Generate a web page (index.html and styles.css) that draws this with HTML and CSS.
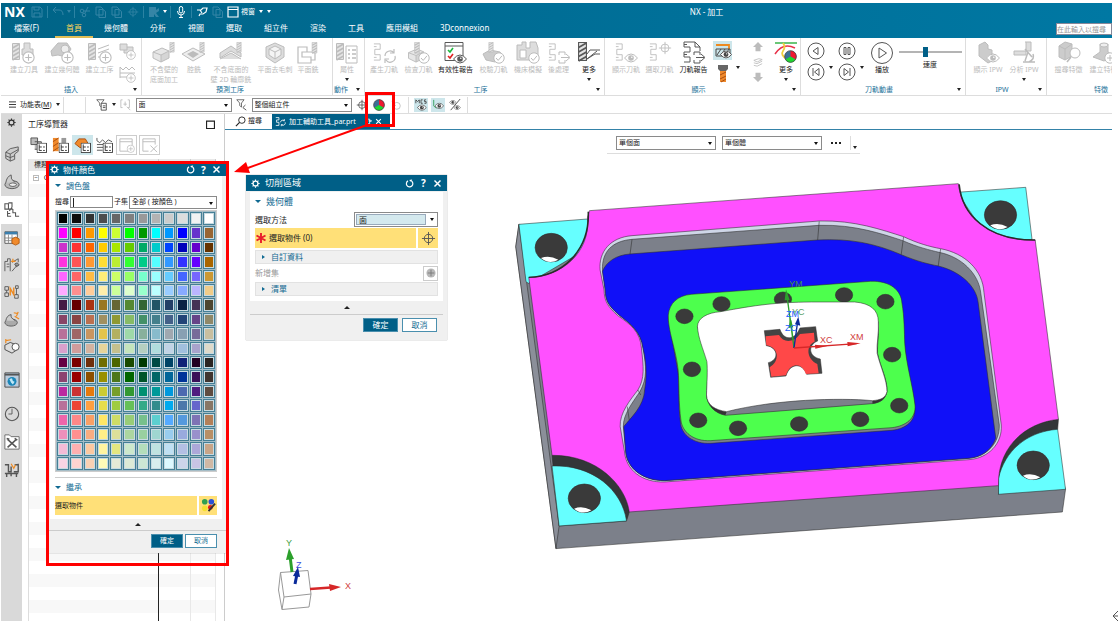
FILE: index.html
```html
<!DOCTYPE html>
<html lang="zh-Hant">
<head>
<meta charset="utf-8">
<title>NX - 加工</title>
<link rel="stylesheet" href="styles.css">
</head>
<body>
<svg class="defs" aria-hidden="true">
  <defs>
    <symbol id="plus" viewBox="0 0 12 12"><circle cx="6" cy="6" r="5.2" fill="#fff" stroke="currentColor"/><path d="M6 3v6M3 6h6" stroke="currentColor"/></symbol>
    <symbol id="check" viewBox="0 0 12 12"><circle cx="6" cy="6" r="5.2" fill="#fff" stroke="currentColor"/><path d="M3 6l2.200 2.400L9 3.800" fill="none" stroke="currentColor"/></symbol>
    <symbol id="eye" viewBox="0 0 14 10"><path d="M.5 5Q7-3 13.500 5 7 13 .5 5z" fill="#fff" stroke="currentColor"/><circle cx="7" cy="5" r="2.800" fill="currentColor"/><circle cx="7.800" cy="4.200" r=".8" fill="#fff"/></symbol>
    <symbol id="mill" viewBox="0 0 8 18"><path d="M.5.5h7v16h-7z" fill="#e4e4e4" stroke="currentColor"/><path d="M.5 5l7-4M.5 9l7-4M.5 13l7-4M.5 17l7-4" stroke="currentColor" stroke-width="1.600"/></symbol>
    <symbol id="path" viewBox="0 0 10 20"><path d="M1 1h7v6H2v6h6v6H1" fill="none" stroke="currentColor"/><path d="M1 4h3M1 16h3" stroke="currentColor"/></symbol>
    <symbol id="cube" viewBox="0 0 18 16"><path d="M1 5l9-4 7 3v7l-8 4-8-4z" fill="#e6e6e6" stroke="currentColor"/><path d="M1 5l8 3 8-4M9 8v7" fill="none" stroke="currentColor"/><path d="M9 8l8-4v7l-8 4z" fill="currentColor" opacity=".4"/></symbol>
    <symbol id="gear" viewBox="0 0 12 12"><circle cx="6" cy="6" r="3.300" fill="none" stroke="currentColor" stroke-width="1.700"/><path d="M6 .5v2M6 9.500v2M.5 6h2M9.500 6h2M2.100 2.100l1.400 1.400M8.500 8.500l1.400 1.400M2.100 9.900l1.400-1.400M8.500 3.500l1.400-1.400" stroke="currentColor" stroke-width="1.500"/></symbol>
    <symbol id="funnel" viewBox="0 0 14 14"><path d="M1 1h10L7.500 5.500V11L5 9V5.500z" fill="none" stroke="currentColor"/></symbol>
    <symbol id="wheel" viewBox="0 0 14 14"><circle cx="7" cy="7" r="6.300" fill="#3c6f96"/><path d="M7 7V.7a6.300 6.300 0 0 1 5.500 9.400z" fill="#f01830"/><path d="M7 7l5.500 3.200a6.300 6.300 0 0 1-11 0z" fill="#20d830"/><circle cx="7" cy="7" r="6.300" fill="none" stroke="#444" stroke-width=".8"/></symbol>
    <symbol id="tree" viewBox="0 0 12 12"><path d="M.5.5h11v11H.5z" fill="#fff" stroke="currentColor"/><path d="M3 2v7h3M3 5h3M7.500 5h2M7.500 9h2" fill="none" stroke="currentColor"/></symbol>
    <symbol id="reset" viewBox="0 0 12 12"><path d="M4 2.500A4.300 4.300 0 1 0 9 3" fill="none" stroke="currentColor" stroke-width="1.600"/><path d="M9.500.5l-4 .8 3 3z" fill="currentColor"/></symbol>
    <symbol id="cross" viewBox="0 0 12 12"><path d="M2 2l8 8M10 2l-8 8" stroke="currentColor" stroke-width="1.900"/></symbol>
    <symbol id="target" viewBox="0 0 16 16"><circle cx="8" cy="8" r="4.500" fill="none" stroke="currentColor"/><path d="M8 1v14M1 8h14" stroke="currentColor"/></symbol>
    <symbol id="copy" viewBox="0 0 12 12"><path d="M1 1h5l2 2v6H1zM4 3.500h4l2.500 2v6H4z" fill="none" stroke="currentColor"/></symbol>
  </defs>
</svg>

<div class="app">
  <header class="top">
    <div class="titlebar">
      <b class="logo">NX</b>
      <div class="quick">
        <button aria-label="儲存" class="dim"><svg viewBox="0 0 12 12"><path d="M1 1h8l2 2v8H1zM3 1v3h5V1M3 11V7h6v4" fill="none" stroke="currentColor"/></svg></button><i class="bar"></i>
        <button aria-label="復原" class="dim"><svg viewBox="0 0 12 12"><path d="M4 1L1 4l3 3M1 4h6q4 0 4 5" fill="none" stroke="currentColor"/></svg></button>
        <i class="tri dim"></i><i class="bar"></i>
        <button aria-label="剪下" class="dim"><svg viewBox="0 0 12 12"><circle cx="3" cy="5" r="1.800" fill="none" stroke="currentColor"/><circle cx="5" cy="9" r="1.800" fill="none" stroke="currentColor"/><path d="M5 5h6M6 7l3-6" stroke="currentColor"/></svg></button>
        <button aria-label="複製" class="dim"><svg><use href="#copy"/></svg></button>
        <button aria-label="貼上" class="dim"><svg><use href="#copy"/></svg></button>
        <button aria-label="定位" class="dim"><svg><use href="#target"/></svg></button><i class="bar"></i>
        <button aria-label="重複" class="dim"><svg viewBox="0 0 12 12"><path d="M1 1h7v3l3-2v3L8 7l3 4H8L6 8v3H1z" fill="currentColor"/></svg></button>
        <i class="tri"></i><i class="bar"></i>
        <button aria-label="語音"><svg viewBox="0 0 12 12"><rect x="4.300" y=".5" width="3.400" height="6.500" rx="1.700" fill="none" stroke="currentColor"/><path d="M2.500 5q0 4 3.500 4t3.500-4M6 9v2.500M4 11.500h4" fill="none" stroke="currentColor"/></svg></button><i class="bar"></i>
        <button aria-label="觸控"><svg viewBox="0 0 12 12"><path d="M1 4l4 0 2-2 4 0-1 4-3 2-3 0-1 2M4 4l2 3" fill="none" stroke="currentColor" stroke-width="1.200"/></svg></button>
        <button aria-label="視窗切換" class="dim"><svg><use href="#copy"/></svg></button>
        <button class="window"><svg viewBox="0 0 12 12"><path d="M1 1h10v10H1zM1 3.500h10" fill="none" stroke="currentColor" stroke-width="1.200"/></svg>視窗</button>
        <i class="tri"></i><i class="tri more"></i>
      </div>
      <h1>NX - 加工</h1>
    </div>
    <div class="menurow">
      <nav class="menu">
        <a href="#f" class="file">檔案(F)</a><a href="#h" class="on">首頁</a><a href="#g">幾何體</a><a href="#a">分析</a><a href="#v">視圖</a><a href="#s">選取</a><a href="#c">組立件</a><a href="#r">渲染</a><a href="#t">工具</a><a href="#m">應用模組</a><a href="#d">3Dconnexion</a>
      </nav>
      <input class="find" type="text" aria-label="搜尋指令" placeholder="在此輸入以搜尋">
    </div>
  </header>

  <div class="ribbon">
    <section class="g1"><div class="tools">
      <button disabled><svg viewBox="0 0 26 24"><use href="#mill" x="1" y="1" width="8" height="20"/><path d="M13 2h6v6h3v6H11V8h2z" fill="#ddd" stroke="currentColor"/><use href="#plus" x="11" y="10" width="13" height="13"/></svg>建立刀具</button>
      <button disabled><svg viewBox="0 0 26 24"><path d="M2 10L9 2h9l4 6-5 8-8-2-6 1z" fill="#ccc" stroke="currentColor"/><circle cx="16" cy="8" r="4" fill="#eee" stroke="currentColor"/><use href="#plus" x="12" y="10" width="13" height="13"/></svg>建立幾何體</button>
      <button disabled><svg viewBox="0 0 26 24"><use href="#mill" x="1" y="1" width="8" height="20"/><path d="M11 8l11-4M11 12l11-4M11 16h9" stroke="currentColor"/><use href="#plus" x="12" y="10" width="13" height="13"/></svg>建立工序</button>
      <div class="stack"><button disabled aria-label="建立程式"><svg viewBox="0 0 18 18"><path d="M1 2h7v6H1zM8 5h6v6H5V8" fill="#ddd" stroke="currentColor"/><use href="#plus" x="7" y="8" width="10" height="10"/></svg></button><button disabled aria-label="建立方法"><svg viewBox="0 0 18 18"><path d="M1 2l3 3 3-3 3 3 3-3 3 3M1 8h15M1 12h8M1 2v11" fill="none" stroke="currentColor"/><use href="#plus" x="7" y="8" width="10" height="10"/></svg></button></div>
    </div><h2>插入<i class="tri"></i></h2></section>
    <section class="g2"><div class="tools">
      <button disabled><svg viewBox="0 0 26 24"><use href="#cube" x="1" y="6" width="18" height="16"/><use href="#mill" x="18" y="1" width="6" height="11"/></svg>不含壁的<br>底面加工</button>
      <button disabled><svg viewBox="0 0 26 24"><path d="M1 13l11-6 12 6-12 7z" fill="#eee" stroke="currentColor"/><path d="M6 13l6-3 6 3-6 4z" fill="currentColor"/><use href="#mill" x="18" y="1" width="6" height="11"/></svg>腔銑</button>
      <button disabled><svg viewBox="0 0 26 24"><path d="M2 12l11-7 10 7v4l-10-6-11 7zM2 18l11-6 10 6" fill="#ddd" stroke="currentColor"/><use href="#mill" x="18" y="1" width="6" height="11"/></svg>不含底面的<br>壁 2D 輪廓銑</button>
      <button disabled><svg viewBox="0 0 26 24"><path d="M4 6l9-4 9 4v10l-9 6-9-6z" fill="#ddd" stroke="currentColor"/><path d="M7 8l6-3 6 3v6l-6 4-6-4z" fill="#f4f4f4" stroke="currentColor"/><path d="M7 8l6 3 6-3M13 11v7" fill="none" stroke="currentColor"/></svg>平面去毛刺</button>
      <button disabled><svg viewBox="0 0 26 24"><path d="M3 6h9v5h-5v5h9v6H3zM12 11h8v8h-4" fill="none" stroke="currentColor" stroke-width="1.200"/><use href="#mill" x="16" y="1" width="7" height="12"/></svg>平面銑</button>
    </div><h2>預測工序</h2></section>
    <section class="g3"><div class="tools">
      <button disabled><svg viewBox="0 0 26 24"><use href="#mill" x="2" y="1" width="8" height="20"/><path d="M12 5h11v17H12z" fill="#fff" stroke="currentColor"/><path d="M14 9h2M18 9h4M14 13h2M18 13h4M14 17h2M18 17h4" stroke="currentColor" stroke-width="1.500"/></svg>屬性<i class="tri"></i></button>
    </div><h2>動作<i class="tri"></i></h2></section>
    <section class="g4"><div class="tools">
      <button disabled><svg viewBox="0 0 26 24"><use href="#path" x="2" y="1" width="9" height="20"/><path d="M14 15a5 5 0 0 1 9-3M24 15a5 5 0 0 1-9 4M23 8v4h-4M14 22v-4h4" fill="none" stroke="currentColor" stroke-width="1.200"/></svg>產生刀軌</button>
      <button disabled><svg viewBox="0 0 26 24"><use href="#cube" x="1" y="7" width="18" height="15"/><use href="#mill" x="8" y="1" width="6" height="12"/><use href="#check" x="12" y="11" width="12" height="12"/></svg>檢查刀軌</button>
      <button><svg viewBox="0 0 26 24"><path d="M2 1.500h18v18H2zM2 5h18" fill="#fff" stroke="currentColor"/><path d="M5 9l2 2 3-4" fill="none" stroke="#1db83c" stroke-width="1.600"/><path d="M5 15l2 2 3-4" fill="none" stroke="#e02020" stroke-width="1.600"/><use href="#eye" x="10" y="13" width="14" height="10"/></svg>有效性報告</button>
      <button disabled><svg viewBox="0 0 26 24"><path d="M2 13l7-4 10 2 3 5-8 5-9-2z" fill="#ccc" stroke="currentColor"/><use href="#mill" x="7" y="1" width="6" height="11"/><use href="#check" x="12" y="11" width="12" height="12"/></svg>校驗刀軌</button>
      <button disabled><svg viewBox="0 0 26 24"><path d="M2 4h5v-3h4v6h4V1h6l2 6v12H2z" fill="#ddd" stroke="currentColor"/><path d="M5 9h6v8H5z" fill="#fff" stroke="currentColor"/><use href="#check" x="13" y="11" width="12" height="12"/></svg>機床模擬</button>
      <button disabled><svg viewBox="0 0 26 24"><use href="#path" x="2" y="1" width="9" height="20"/><path d="M13 14v-3h6v3M13 19v3h6v-3M15 16.500h8M20 13l4 3.500-4 3.500" fill="none" stroke="currentColor"/></svg>後處理</button>
      <button><svg viewBox="0 0 26 24"><use href="#mill" x="2" y="0" width="9" height="22"/><path d="M11 13l3-4h10M11 18l8-5h5M11 18l10-8" stroke="currentColor" fill="none"/></svg>更多<i class="tri"></i></button>
    </div><h2>工序<i class="tri"></i></h2></section>
    <section class="g5"><div class="tools">
      <button disabled><svg viewBox="0 0 26 24"><use href="#path" x="2" y="1" width="9" height="20"/><use href="#eye" x="11" y="12" width="14" height="10"/></svg>顯示刀軌</button>
      <button disabled><svg viewBox="0 0 26 24"><use href="#path" x="2" y="1" width="9" height="20"/><use href="#target" x="11" y="0" width="14" height="14"/></svg>選取刀軌</button>
      <button><svg viewBox="0 0 26 24"><path d="M3 1h11l5 5v4M3 1v5h6v5H3v5h6v5H3M3 3.500h3M3 13.500h3M14 1v5h5M13 14v-3h6v3M13 19v3h6v-3M15 16.500h8M20 13l4 3.500-4 3.500" fill="none" stroke="currentColor"/></svg>刀軌報告</button>
      <div class="stack"><button class="lit" aria-label="顯示切削"><svg viewBox="0 0 18 18"><path d="M2 3h13v4" fill="none" stroke="#ee8a20" stroke-width="1.800"/><path d="M2 7h14v7H2zM3 13l4-6M7 13l4-6M11 13l4-6" fill="none" stroke="currentColor"/><use href="#eye" x="6" y="8" width="12" height="9"/></svg></button><button aria-label="顯示刀具"><svg viewBox="0 0 18 18"><path d="M4 0h10v4l-2 2H6L4 4z" fill="#666"/><path d="M6 6h6v11H6z" fill="#f08a2c"/><path d="M6 10l6-3M6 14l6-3M7 17l5-3" stroke="#a94e10"/></svg></button></div>
      <div class="mini"><i class="tri"></i></div>
      <div class="stack tight"><button disabled aria-label="上移"><svg viewBox="0 0 12 12"><path d="M6 0l6 6H9v5H3V6H0z" fill="currentColor"/></svg></button><button disabled aria-label="圖層"><svg viewBox="0 0 12 12"><path d="M1 4l6-2 4 1-6 3zM1 7l4 1 6-3M1 10l4 1 6-3" fill="none" stroke="currentColor"/></svg></button><button disabled aria-label="下移"><svg viewBox="0 0 12 12"><path d="M6 12l6-6H9V1H3v5H0z" fill="currentColor"/></svg></button></div>
      <button><svg viewBox="0 0 26 24"><path d="M2 2h22" stroke="#39b54a" stroke-width="1.500"/><path d="M2 13q8-12 20-6" fill="none" stroke="#e8324a" stroke-width="1.500"/><path d="M10 2q3 4 0 8t4 8" fill="none" stroke="#f0cf40" stroke-width="1.800"/><use href="#wheel" x="11" y="9" width="13" height="13"/></svg>更多<i class="tri"></i></button>
    </div><h2>顯示<i class="tri"></i></h2></section>
    <section class="g6"><div class="tools">
      <div class="stack round"><button aria-label="倒播"><svg viewBox="0 0 18 18"><circle cx="9" cy="9" r="8"/><path d="M11 5.500L6 9l5 3.500z"/></svg></button><button aria-label="上一步"><svg viewBox="0 0 18 18"><circle cx="9" cy="9" r="8"/><path d="M12 5.500L7.500 9l4.500 3.500zM6 5v8"/></svg></button></div>
      <div class="mini low"><i class="tri"></i></div>
      <div class="stack round"><button aria-label="暫停"><svg viewBox="0 0 18 18"><circle cx="9" cy="9" r="8"/><path d="M6 5.500h2v7H6zM10 5.500h2v7h-2z"/></svg></button><button aria-label="下一步"><svg viewBox="0 0 18 18"><circle cx="9" cy="9" r="8"/><path d="M6 5.500L10.500 9 6 12.500zM12 5v8"/></svg></button></div>
      <div class="mini low"><i class="tri"></i></div>
      <button class="play"><svg viewBox="0 0 24 24"><circle cx="12" cy="12" r="10.500"/><path d="M9 7l7.500 5L9 17z"/></svg>播放</button>
      <label class="speed"><input type="range" min="0" max="100" value="43">速度</label>
    </div><h2>刀軌動畫<i class="tri"></i></h2></section>
    <section class="g7"><div class="tools">
      <button disabled><svg viewBox="0 0 26 24"><path d="M4 4l6-3 3 3v4l4 1v4l4 1v4l-8 4-9-7z" fill="#ccc" stroke="currentColor"/><use href="#eye" x="11" y="12" width="14" height="10"/></svg>顯示 IPW</button>
      <button disabled><svg viewBox="0 0 26 24"><path d="M14 1h6v9H3v4h12V1" fill="#ddd" stroke="currentColor"/><path d="M14 8l7 8M12 21h12M17 11l-3 9M22 13q2 5-4 8" fill="none" stroke="currentColor" stroke-width="1.500"/></svg>分析 IPW<i class="tri"></i></button>
    </div><h2>IPW<i class="tri"></i></h2></section>
    <section class="g8"><div class="tools">
      <button disabled><svg viewBox="0 0 26 24"><path d="M3 5l6-4 7 2v12l-7 4-6-3z" fill="#ccc" stroke="currentColor"/><path d="M3 5l6 3 7-5M9 8v11" fill="none" stroke="currentColor"/><circle cx="19" cy="12" r="5" fill="#fff" stroke="currentColor"/><path d="M15 16l-4 5" stroke="currentColor" stroke-width="1.600"/></svg>搜尋特徵</button>
      <button disabled><svg viewBox="0 0 26 24"><path d="M2 16l7-5V3h8v8l6 4-10 5z" fill="#ccc" stroke="currentColor"/><ellipse cx="13" cy="4" rx="4" ry="2" fill="#eee" stroke="currentColor"/><use href="#plus" x="13" y="11" width="12" height="12"/></svg>建立特徵</button>
    </div><h2>特徵</h2></section>
  </div>

  <div class="selbar">
    <button class="fn"><svg viewBox="0 0 8 8"><path d="M0 1h8M0 4h8M0 7h8" stroke="currentColor"/></svg><span>功能表(<u>M</u>)</span><i class="tri"></i></button>
    <i class="vr"></i><i class="vr far"></i>
    <button aria-label="篩選"><svg viewBox="0 0 14 14"><use href="#funnel" width="12" height="12"/><path d="M6 5h6v8H6zM8 8h3M8 10h3" fill="#fff" stroke="currentColor"/></svg></button><i class="tri"></i>
    <button disabled aria-label="加入選取"><svg viewBox="0 0 14 14"><path d="M3 1H1v9h2M9 1h2v9H9M6 3v5M4 6h4M8 9l4 4" fill="none" stroke="currentColor"/></svg></button>
    <span class="combo type"><select aria-label="類型篩選"><option>面</option></select></span>
    <button aria-label="重設篩選"><svg viewBox="0 0 14 14"><use href="#funnel" width="12" height="12"/><path d="M8 10l3-3M8 10l4 3" stroke="currentColor"/></svg></button>
    <span class="combo scope"><select aria-label="選取範圍"><option>整個組立件</option></select></span>
    <button aria-label="定位"><svg><use href="#target"/></svg></button>
    <button aria-label="物件顏色"><svg><use href="#wheel"/></svg></button>
    <button disabled aria-label="隱藏"><svg viewBox="0 0 14 14"><circle cx="8" cy="8" r="4" fill="none" stroke="currentColor"/><path d="M2 3l5 5" stroke="currentColor"/></svg></button>
    <i class="vr mid"></i>
    <button class="lit" aria-label="顯示 MCS"><svg viewBox="0 0 14 14"><path d="M1 5V1l2 2 2-2v4M9 1H7v4h2M13 1h-2v2h2v2h-2" fill="none" stroke="currentColor"/><use href="#eye" x="2" y="6" width="12" height="8"/></svg></button>
    <button class="lit" aria-label="顯示座標"><svg viewBox="0 0 14 14"><path d="M2 1v7l3 3" fill="none" stroke="#2a9a50"/><use href="#eye" x="3" y="4" width="11" height="8"/></svg></button>
    <button aria-label="反轉顯示"><svg viewBox="0 0 14 14"><use href="#eye" x="0" y="1" width="9" height="6"/><use href="#eye" x="5" y="7" width="9" height="6"/><path d="M13 0L2 13" stroke="currentColor"/></svg></button>
    <i class="vr mid"></i>
  </div>

  <main class="work">
    <aside class="rail">
      <button class="first" aria-label="設定"><svg><use href="#gear"/></svg></button>
      <button aria-label="組立件導覽器"><svg viewBox="0 0 18 18"><path d="M2 7l5-4 9-2v5l-4 3v6l-5 2-5-3z" fill="#ccc" stroke="#555"/><path d="M2 7l5 2 9-5M7 9v8M2 11l5 2 5-2" fill="none" stroke="#555"/></svg></button>
      <button aria-label="零件導覽器"><svg viewBox="0 0 18 18"><ellipse cx="9" cy="12" rx="8" ry="4.500" fill="#bbb" stroke="#555"/><ellipse cx="10" cy="12" rx="4" ry="2" fill="#eee" stroke="#555"/><path d="M2 10Q3 3 8 1q-1 5 4 8" fill="#ccc" stroke="#555"/></svg></button>
      <button class="on" aria-label="工序導覽器"><svg viewBox="0 0 18 18"><path d="M1 2h4v6H1zM5 1h4v5M1 8h7M9 6l-3 4M4 10v6h4M10 8v4h3v4h4M10 8h-2M4 13h3" fill="none" stroke="#555" stroke-width="1.200"/></svg></button>
      <button class="s" aria-label="加工特徵"><svg viewBox="0 0 18 18"><path d="M1 2h14v13H1z" fill="#fff" stroke="#555"/><path d="M1 2h14v3H1z" fill="#3b7fae"/><path d="M1 9h14M1 12h14M5 5v10M9 5v10" stroke="#888"/><path d="M9 10l4-2 4 2v5l-4 2-4-2z" fill="#f08a2c" stroke="#b45a10"/></svg></button>
      <button class="s" aria-label="機床導覽器"><svg viewBox="0 0 18 18"><path d="M1 16V5h3V2h3v14M9 6l7-4v4M3 8h3M3 11h3" fill="none" stroke="#555"/><path d="M9 16l6-7M12 8q3-3 5 1l-3 2z" stroke="#555" fill="#999"/><path d="M10 2v4M8 5h5" stroke="#ee8a20" stroke-width="1.400"/></svg></button>
      <button class="s" aria-label="程序"><svg viewBox="0 0 18 18"><path d="M1 3h4v4H1zM3 7v3M1 10h4v4H1zM13 2h3v3h-3zM12 12h4v4h-4zM14 5v7" fill="none" stroke="#555"/><path d="M7 13V5l4 7V4" fill="none" stroke="#ee8a20" stroke-width="1.600"/></svg></button>
      <button class="s" aria-label="刀具"><svg viewBox="0 0 18 18"><ellipse cx="8" cy="13" rx="7" ry="4" fill="#aaa" stroke="#555"/><path d="M2 11Q3 5 8 4q-1 4 5 7" fill="#ccc" stroke="#555"/><path d="M11 2l5 1M16 1l-2 5M12 6l5 3" stroke="#ee8a20" stroke-width="1.300"/></svg></button>
      <button aria-label="檢查"><svg viewBox="0 0 18 18"><path d="M1 8l6-3 8 3v5l-6 4-8-4z" fill="#ddd" stroke="#444"/><circle cx="13" cy="10" r="4" fill="#fff" stroke="#444"/><path d="M2 1v5M2 3l6-1" stroke="#ee8a20" stroke-width="1.300"/></svg></button>
      <button class="gap" aria-label="網頁瀏覽器"><svg viewBox="0 0 18 18"><path d="M1 1h16v16H1z" fill="#bcd" stroke="#444"/><path d="M1 3h16" stroke="#555" stroke-width="2"/><circle cx="9" cy="10.500" r="5" fill="#1b86b8"/><path d="M6 8l3-1 1 3 2 1-2 3-2-2z" fill="#bfe6f5"/></svg></button>
      <button class="gap2" aria-label="歷程"><svg viewBox="0 0 18 18"><circle cx="9" cy="9" r="7.500" fill="none" stroke="#555" stroke-width="1.200"/><path d="M9 3v6H5" fill="none" stroke="#555"/></svg></button>
      <button aria-label="工具"><svg viewBox="0 0 18 18"><path d="M1 4V1h5l2 2h9v14H1z" fill="#fff" stroke="#666"/><path d="M4 6l10 9M14 6L4 15M3 5l3 1M12 5l3 2" stroke="#555" stroke-width="1.700"/></svg></button>
      <button aria-label="機床"><svg viewBox="0 0 18 18"><path d="M1 3h4v8h3V5M16 2v9h-5M1 13h15M3 13v4M8 13v3M14 13v4M12 3h4" fill="none" stroke="#555" stroke-width="1.600"/><path d="M8 2l3 5 2-4" stroke="#ee8a20" fill="none" stroke-width="1.300"/></svg></button>
    </aside>

    <section class="navigator">
      <div class="navhead"><h2>工序導覽器</h2><button aria-label="最大化"><svg viewBox="0 0 8 8"><path d="M.5 1h7v6.500h-7z" fill="none" stroke="currentColor"/></svg></button></div>
      <div class="navtools">
        <button aria-label="程式順序視圖"><svg viewBox="0 0 18 18"><path d="M1 1h7v7H1zM5 5h7v8H5" fill="#bbb" stroke="#555"/><use href="#tree" x="7" y="6" width="11" height="11"/></svg></button>
        <button aria-label="機床視圖"><svg viewBox="0 0 18 18"><path d="M1 1h6v14H1z" fill="#f08a2c"/><path d="M1 5l6-4M1 10l6-4M1 15l6-4" stroke="#a94e10"/><path d="M10 1h5v6h-5z" fill="#999"/><use href="#tree" x="7" y="6" width="11" height="11"/></svg></button>
        <button class="lit" aria-label="幾何視圖"><svg viewBox="0 0 18 18"><path d="M1 7l4-5 7 0 3 5-5 5-4-1z" fill="#f08a2c" stroke="#a94e10"/><use href="#tree" x="7" y="6" width="11" height="11"/></svg></button>
        <button aria-label="加工方法視圖"><svg viewBox="0 0 18 18"><path d="M1 1v3l3 2 3-3 3 3 3-3 4 2M1 8h10M1 11h8M1 14h6" fill="none" stroke="#555"/><use href="#tree" x="7" y="6" width="11" height="11"/></svg></button>
        <button class="boxed" disabled aria-label="新增欄"><svg viewBox="0 0 18 18"><path d="M2 2h13v13H2zM2 5h13" fill="none" stroke="currentColor"/><use href="#plus" x="9" y="8" width="9" height="9"/></svg></button>
        <button class="boxed" disabled aria-label="刪除欄"><svg viewBox="0 0 18 18"><path d="M8 15H2V2h13v6M2 5h13M10 9l7 7M17 9l-7 7" fill="none" stroke="currentColor"/></svg></button>
      </div>
      <div class="treebox"><table class="optree">
        <thead><tr><th class="c1">標題</th><th class="c2"></th><th class="c3"></th></tr></thead>
        <tbody id="rows"><tr><td><span class="fold">−</span> GEOMETRY</td><td></td><td></td></tr></tbody>
      </table></div>
    </section>

    <section class="view">
      <div class="tabs">
        <button class="tab"><svg viewBox="0 0 12 12"><circle cx="7.500" cy="4.500" r="3.500" fill="none" stroke="currentColor"/><path d="M5 7l-4 4" stroke="currentColor" stroke-width="1.300"/></svg>搜尋</button>
        <button class="tab on"><svg viewBox="0 0 14 12"><path d="M1 1h4v3H2v3h3v4H1M7 7a3 3 0 0 1 5-2M13 7a3 3 0 0 1-5 3M12 3v2h-2M8 12v-2h2" fill="none" stroke="currentColor"/></svg><span>加工輔助工具_par.prt</span><svg class="sm" viewBox="0 0 12 12"><path d="M2 2h6v8H2zM6 5h5M9 3l2 2-2 2" fill="none" stroke="currentColor" stroke-width="1.400"/></svg><svg class="sm"><use href="#cross"/></svg></button>
      </div>
      <div class="canvas">
        <svg class="scene" viewBox="225 130 893 495" role="img" aria-label="加工零件模型">
          <g transform="translate(500 130) scale(.3941 .3333)" class="solid">
            <path fill="#7c808a" d="M48 283L40 350 142 1256 1427 1146 1435 1078 1300 600z"/>
            <path fill="#8b8f99" d="M48 283L40 350 142 1256 150 1188z"/>
            <path fill="#6ff" d="M48 283L222 267 230 350 72 460 66 455z"/>
            <path fill="#6ff" d="M1160 187L1334 172 1350 328 1250 345z"/>
            <path fill="#333638" d="M132 976C250 975 320 1070 328 1146L321 1173 150 1188z"/>
            <path fill="#6ff" d="M132 1008C235 1003 310 1080 321 1173L150 1188z"/>
            <path fill="#333638" d="M1417 868C1325 880 1262 960 1265 1067L1265 1093 1415 898z"/>
            <path fill="#6ff" d="M1415 898L1435 1078 1265 1093 1265 1045C1280 965 1335 905 1415 898z"/>
            <path fill="#ff50ff" d="M227 242L1163 161C1172 252 1235 332 1358 330L1417 868C1325 880 1262 960 1265 1067L328 1146C320 1070 250 975 132 976L73 442C155 440 230 370 222 262z"/>
            <path fill="none" stroke-width="4" d="M73 442C155 440 228 365 224 245M1165 163C1172 252 1235 332 1358 330"/>
            <path fill="#cfd6e8" d="M335 317L810 273C900 270 970 300 1024 320 1060 340 1090 350 1118 356 1180 370 1225 420 1228 487L1272 885C1275 940 1240 985 1190 989L418 1056C360 1058 320 1020 316 966L305 890C303 850 330 810 350 780 368 745 364 710 359 655 356 605 330 582 300 558 270 528 265 510 264 480L254 420C250 365 280 322 335 317z"/>
            <path fill="#7c808a" d="M335 328L810 286C900 283 970 312 1022 332 1060 352 1090 360 1114 367 1170 380 1215 430 1220 490L1267 885C1268 940 1235 980 1190 985L418 1052C362 1052 323 1015 319 966L313 890C312 855 335 820 355 785 374 745 371 710 363 655 358 605 330 580 302 555 273 525 268 510 267 480L260 420C258 365 285 333 335 328z"/>
            <path fill="#1010f8" d="M330 372L806 330C890 325 950 340 1018 374 1060 395 1090 403 1112 408 1170 425 1208 470 1213 515L1258 925C1245 965 1220 981 1190 985L418 1052C362 1052 323 1015 319 966L314 890C330 865 365 830 367 780 374 730 370 690 363 655 358 605 330 580 302 555 273 525 268 510 267 480L260 424C270 395 295 375 330 372z"/>
            <path fill="none" d="M335 328L330 372M810 274L806 330M1024 321L1018 374M1118 357L1112 408M350 780L357 795M323 830L328 870"/>
            <path fill="#7c808a" d="M485 501L940 462 1026 648C1030 708 1048 778 1052 833 1056 873 1030 896 995 901L535 940C490 943 460 913 458 878 452 828 455 768 452 728L427 563z"/>
            <path fill="#4dff4d" d="M485 493L940 454C990 452 1018 480 1020 520 1026 560 1026 610 1027 640 1030 700 1048 770 1053 825 1056 865 1030 888 995 893L535 932C490 935 462 905 459 870 453 820 455 760 452 720 447 660 425 600 427 555 430 520 450 497 485 493z"/>
            <g fill="#3a3a3a"><circle cx="468" cy="559" r="22"/><circle cx="562" cy="522" r="22"/><circle cx="718" cy="508" r="22"/><circle cx="873" cy="495" r="22"/><circle cx="978" cy="515" r="22"/><circle cx="487" cy="718" r="22"/><circle cx="995" cy="674" r="22"/><circle cx="503" cy="871" r="22"/><circle cx="604" cy="895" r="22"/><circle cx="759" cy="882" r="22"/><circle cx="914" cy="868" r="22"/><circle cx="1013" cy="827" r="22"/></g>
            <path fill="#7c808a" d="M560 545L960 575C962 620 957 640 958 670 965 710 984 750 982 785 978 808 965 818 945 821L572 856C545 850 525 825 524 795 525 760 530 720 528 695L501 590z"/>
            <path fill="#333" stroke="none" d="M524 795C525 825 545 850 572 856L575 845zM945 821C965 818 978 808 982 785L945 812z"/>
            <path fill="#fff" d="M560 545C650 525 700 517 790 516L900 516C940 520 960 540 960 575 962 610 955 640 957 670 965 710 982 750 982 785 978 805 965 810 945 812 860 803 700 808 575 845 545 840 525 825 524 795 525 760 527 720 525 695 515 655 503 625 501 590 501 565 525 548 560 545z"/>
            <g fill="#3a3a3a"><ellipse cx="130" cy="353" rx="41" ry="43"/><ellipse cx="1270" cy="255" rx="41" ry="43"/><ellipse cx="214" cy="1105" rx="41" ry="43"/><ellipse cx="1353" cy="1006" rx="41" ry="43"/></g>
            <g fill="#fff" stroke="none"><path d="M104 384Q125 374 148 389 125 405 104 384zM1244 286Q1265 276 1288 291 1265 307 1244 286zM188 1136Q209 1126 232 1141 209 1157 188 1136zM1327 1037Q1348 1027 1371 1042 1348 1058 1327 1037z"/></g>
          </g>
          <g transform="translate(640 260) scale(.3333)" class="solid">
            <path fill="#444" d="M373 212L420 208C430 240 462 245 480 204L527 200 533 243C503 255 505 290 541 297L546 340 500 343C488 308 450 308 438 348L392 352 385 308C418 300 415 262 379 257z"/>
            <path fill="#ff4848" stroke="none" d="M377 229L417 225C430 250 462 248 480 222L522 218 524 245C498 255 498 296 532 312L536 340 498 342C486 306 450 306 438 346L394 350 389 322C420 305 418 262 379 256z"/>
            <g stroke-width="4"><path stroke="#2ca02c" d="M462 264L440 100M462 264L452 180"/><path stroke="#0a2a9a" d="M462 264L473 185"/><path stroke="#d62728" d="M462 264L650 251"/></g>
            <g stroke="none"><path fill="#2ca02c" d="M438 88L449 120 434 121zM450 172L460 202 446 204z"/><path fill="#0a2a9a" d="M475 170L481 197 465 193z"/><path fill="#d62728" d="M662 250L622 246 623 259zM562 258L525 254 526 266z"/></g>
          </g>
          <g class="axis">
            <text x="789" y="287" fill="#3f8f3f">YM</text><text x="792" y="315" fill="#5aa06a">YC</text><text x="786" y="317" fill="#2060ff">ZM</text><text x="785" y="331" fill="#2060ff">ZC</text><text x="820" y="343" fill="#d04040">XC</text><text x="850" y="340" fill="#d04040">XM</text>
            <text x="286" y="546" fill="#3f9f3f">Y</text><text x="296" y="568" fill="#4050e0">Z</text><text x="345" y="589" fill="#d04040">X</text>
          </g>
          <g fill="none" stroke="#999"><path d="M280.500 572.500L308 570.500 311 594 309 607 282 609.500 278.500 590zM280.500 572.500L284 597 282 609.500M284 597L311 594"/></g>
          <path d="M292 572L290 556" stroke="#2ca02c" stroke-width="3"/><path d="M289 548L294 559 286 560z" fill="#2ca02c"/>
          <path d="M295 584L297 574" stroke="#0a2a9a" stroke-width="3"/><path d="M298 567L300 577 293 576z" fill="#0a2a9a"/>
          <path d="M310 589L331 587.500" stroke="#d62728" stroke-width="2.500"/><path d="M341 587L329 584 330 591z" fill="#d62728"/>
          <path d="M1118 611L1113 616 1118 621M1113 616h6" fill="none" stroke="#555"/>
        </svg>
        <div class="pickbar">
          <span class="combo"><select aria-label="面規則"><option>單個面</option></select></span>
          <span class="combo"><select aria-label="體規則"><option>單個體</option></select></span>
          <button aria-label="更多選項"><svg viewBox="0 0 12 4"><path d="M1 1h2v2H1zM5 1h2v2H5zM9 1h2v2H9z" fill="currentColor"/></svg></button><i class="vr"></i><i class="tri"></i>
        </div>
      </div>
    </section>
  </main>

  <form class="dialog color">
    <header><svg><use href="#gear"/></svg><h2>物件顏色</h2><button type="button" aria-label="重設"><svg><use href="#reset"/></svg></button><button type="button" aria-label="說明">?</button><button type="button" aria-label="關閉"><svg><use href="#cross"/></svg></button></header>
    <div class="pane">
      <h3><i class="tri"></i>調色盤</h3>
      <div class="search"><label for="cs">搜尋</label><input id="cs" type="text"><label for="sub">子集</label><span class="combo"><select id="sub"><option>全部 ( 按顏色 )</option></select></span></div>
      <div class="palette" id="palette"></div>
      <h3 class="inherit"><i class="tri"></i>繼承</h3>
      <div class="pick"><span>選取物件</span><button type="button" aria-label="選取物件"><svg viewBox="0 0 16 16"><circle cx="4" cy="4" r="3" fill="#30a050"/><circle cx="11" cy="4" r="3" fill="#2a50d8"/><circle cx="4" cy="11" r="3" fill="#f5e030"/><circle cx="10" cy="10" r="2.600" fill="#e02020"/><path d="M15 6L8 14" stroke="#333" stroke-width="2"/></svg></button></div>
    </div>
    <div class="fold-up"><i class="tri up"></i></div>
    <footer><button type="button" class="ok">確定</button><button type="button" class="cancel">取消</button></footer>
  </form>

  <form class="dialog area">
    <header><svg><use href="#gear"/></svg><h2>切削區域</h2><button type="button" aria-label="重設"><svg><use href="#reset"/></svg></button><button type="button" aria-label="說明">?</button><button type="button" aria-label="關閉"><svg><use href="#cross"/></svg></button></header>
    <div class="pane">
      <h3><i class="tri"></i>幾何體</h3>
      <div class="row"><label for="how">選取方法</label><span class="combo"><select id="how"><option>面</option></select></span></div>
      <div class="pick"><span><svg viewBox="0 0 12 12"><path d="M6 1v10M1.500 3.500l9 5M1.500 8.500l9-5" stroke="#e81e2c" stroke-width="1.900"/></svg>選取物件 (0)</span><button type="button" aria-label="選取物件"><svg><use href="#target"/></svg></button></div>
      <button type="button" class="section"><i class="tri right"></i>自訂資料</button>
      <div class="row muted"><span>新增集</span><button type="button" class="add" disabled aria-label="新增集"><svg viewBox="0 0 12 12"><circle cx="6" cy="6" r="5.500" fill="#b8b8b8"/><path d="M6 2v8M2 6h8" stroke="#777"/></svg></button></div>
      <button type="button" class="section"><i class="tri right"></i>清單</button>
    </div>
    <div class="fold-up"><i class="tri up"></i></div>
    <footer><button type="button" class="ok">確定</button><button type="button" class="cancel">取消</button></footer>
  </form>

  <svg class="marks" viewBox="0 0 1118 625" aria-hidden="true">
    <g fill="none" stroke="red" stroke-width="3"><rect x="366.500" y="93.500" width="27" height="32"/><rect x="47.500" y="162.500" width="180" height="402"/><path d="M367 125L245 169" stroke-width="2"/></g>
    <path d="M234 172L246 162 250 173z" fill="red"/>
  </svg>
</div>
<script src="palette.js"></script>
</body>
</html>
```
FILE: styles.css
```css
* { box-sizing: border-box; }
body { margin: 0; background: #fff; color: #222; font: 7px/10px "Noto Sans", "Noto Sans CJK TC", sans-serif; }
h1, h2, h3 { margin: 0; font-size: inherit; font-weight: 400; }
button, select, input { margin: 0; padding: 0; border: 0; background: none; color: inherit; font: inherit; border-radius: 0; }
button { display: inline-flex; align-items: center; justify-content: center; white-space: nowrap; }
svg { flex: none; }
.defs { position: absolute; width: 0; height: 0; }
.app { position: relative; display: flex; flex-direction: column; min-height: 100vh; padding: 3px 0 0 1px; overflow: hidden; }
.tri { flex: none; width: 0; height: 0; border: 2px solid transparent; border-top: 3px solid currentColor; border-bottom: 0; }
.tri.up { border-top: 0; border-bottom: 3px solid currentColor; border-left-width: 3px; border-right-width: 3px; }
.tri.right { border: 2px solid transparent; border-left: 3px solid currentColor; border-right: 0; }
.vr { flex: none; width: 1px; height: 16px; background: #ddd; }
.lit { background: #cde6eb; }

.top { margin-right: 6px; background: linear-gradient(90deg, #006487, #007099 60%, #0078a3); color: #fff; }
.titlebar { position: relative; display: flex; align-items: center; height: 17px; padding-left: 3px; }
.logo { width: 26px; font: bold 14px/17px "Noto Sans", sans-serif; }
.quick { display: flex; align-items: center; gap: 2px; }
.quick svg { width: 12px; height: 12px; }
.quick button { width: 14px; height: 14px; }
.quick .window { width: auto; gap: 2px; padding-right: 2px; }
.quick .bar { width: 1px; height: 12px; background: #2b83a3; margin: 0 1px; }
.quick .more { margin-left: 2px; }
.quick .dim { color: #3585a6; }
.titlebar h1 { position: absolute; left: 62%; font-size: 8px; }
.menurow { display: flex; align-items: center; justify-content: space-between; height: 18px; }
.menu { display: flex; gap: 22px; padding-left: 13px; align-items: stretch; height: 18px; }
.menu a { color: #fff; font-size: 8px; line-height: 16px; text-decoration: none; white-space: nowrap; }
.menu .file { margin-right: 5px; }
.menu .on { color: #ffd65a; border-bottom: 2px solid #e0bd55; padding: 0 11px; margin: 0 -11px; }
.find { width: 56px; height: 12px; background: #fff; border: 1px solid #889; color: #333; }
.find::placeholder { color: #999; }

.ribbon { display: flex; height: 58px; margin-right: 6px; border-bottom: 1px solid #ddd; overflow: hidden; }
.ribbon section { display: flex; flex: none; flex-direction: column; justify-content: space-between; padding-top: 3px; border-right: 1px solid #ddd; height: 57px; }
.tools { display: grid; align-items: start; height: 42px; }
.tools > button, .speed { display: flex; flex-direction: column; align-items: center; justify-content: start; line-height: 10px; text-align: center; }
.tools > button > svg { width: 26px; height: 24px; color: #585858; }
.tools .tri { color: #222; margin-top: 3px; }
.tools button:disabled, .tools button:disabled > svg { color: #bcbcbc; }
.ribbon h2 { position: relative; color: #1a7098; text-align: center; line-height: 11px; }
.ribbon h2 .tri { position: absolute; right: 4px; top: 4px; color: #222; }
.stack { display: flex; flex-direction: column; align-items: center; gap: 4px; }
.stack button { width: 19px; height: 19px; color: #484848; }
.stack svg { width: 18px; height: 18px; }
.stack.tight { gap: 3px; }
.stack.tight button { height: 12px; }
.stack.tight svg { width: 10px; height: 10px; }
.round { gap: 2px; }
.round svg, .play svg { fill: none; stroke: #555; }
.mini { padding: 28px 0 0 2px; }
.g1 .tools { grid-template-columns: 38px 38px 37px 20px; padding-left: 4px; }
.g1 { width: 141px; }
.g2 .tools { grid-template-columns: 36px 24px 50px 38px 28px; padding-left: 4px; }
.g2 { width: 191px; }
.ribbon .g2 h2 { padding-right: 14px; }
.g3 .tools { grid-template-columns: 28px; }
.g3 { width: 32px; }
.ribbon .g3 h2 { padding-right: 15px; }
.g4 .tools { grid-template-columns: 34px 35px 39px 37px 32px 29px 32px; padding-left: 2px; }
.g4 { width: 240px; }
.ribbon .g4 h2 { padding-right: 8px; }
.g5 .tools { grid-template-columns: 34px 33px 35px 23px 10px 28px 28px; padding-left: 4px; }
.g5 { width: 196px; }
.ribbon .g5 h2 { padding-right: 8px; }
.g6 .tools { grid-template-columns: 22px 9px 22px 8px 32px 64px; padding-left: 4px; }
.g6 { width: 165px; }
.ribbon .g6 h2 { padding-right: 8px; }
.g7 .tools { grid-template-columns: 36px 36px; padding-left: 4px; }
.g7 { width: 81px; }
.ribbon .g7 h2 { padding-right: 8px; }
.g8 .tools { grid-template-columns: 35px 35px; padding-left: 4px; }
.g8 { width: 105px; }
.ribbon .g8 h2 { text-align: left; padding-left: 47px; }
.speed { padding-top: 6px; gap: 3px; }
.speed input { appearance: none; width: 63px; height: 10px; margin: 0; background: linear-gradient(#b4b4b4, #b4b4b4) center / 100% 2px no-repeat; }
.speed input::-webkit-slider-thumb { appearance: none; width: 5px; height: 10px; background: #005f87; }

.selbar { display: flex; align-items: center; gap: 3px; height: 18px; margin-right: 6px; padding-left: 8px; border-bottom: 1px solid #ddd; }
.selbar button { width: 14px; height: 14px; color: #444; }
.selbar button:disabled { color: #bbb; }
.selbar svg { width: 12px; height: 12px; }
.selbar .fn { width: auto; gap: 4px; color: #222; }
.selbar .fn svg { width: 7px; height: 7px; }
.selbar .far { margin: 0 6px 0 18px; }
.selbar .mid { margin: 0 2px; }
.combo { position: relative; display: inline-flex; height: 14px; border: 1px solid #8a8a8a; background: #fff; }
.combo::after { content: ""; position: absolute; right: 3px; top: 5px; border: 2px solid transparent; border-top: 3px solid #111; border-bottom: 0; }
.combo select { appearance: none; width: 100%; padding-left: 2px; color: #222; }
.type { width: 96px; }
.scope { width: 100px; }

.work { display: flex; flex: 1; min-height: 0; }
.rail { display: flex; flex: none; flex-direction: column; width: 21px; margin-bottom: 4px; background: #d9d9d9; }
.rail button { width: 21px; height: 28px; }
.rail svg { width: 16px; height: 16px; }
.rail .first { height: 16px; margin-bottom: 10px; color: #333; }
.rail .first svg { width: 9px; height: 9px; }
.rail .on { background: #fff; }
.rail .s { height: 27px; }
.rail .gap { margin-top: 6px; }
.rail .gap2 { margin-top: 6px; }
.navigator { flex: none; width: 203px; padding-left: 6px; border-right: 1px solid #ccc; margin-bottom: 4px; display: flex; flex-direction: column; }
.navhead { display: flex; justify-content: space-between; align-items: center; height: 20px; padding-right: 9px; }
.navhead h2 { font-size: 8px; }
.navhead svg { width: 9px; height: 9px; }
.navtools { display: flex; gap: 1px; height: 25px; align-items: start; padding-top: 1px; }
.navtools button { width: 21px; height: 20px; }
.navtools svg { width: 17px; height: 17px; }
.navtools .boxed { border: 1px solid #ccc; color: #bbb; margin-right: 1px; }
.treebox { flex: 1 1 0; overflow: hidden; width: 188px; }
.optree { width: 188px; border-collapse: collapse; table-layout: fixed; border-left: 1px solid #ddd; }
.optree th { height: 12px; padding: 0 0 0 5px; background: #e8e8e8; text-align: left; font-weight: 400; border-right: 1px solid #ccc; }
.optree td { height: 13px; padding: 0 0 0 4px; border-right: 1px solid #e8e8e8; }
.optree td:first-child { border-right-color: #222; }
.optree tbody tr:nth-child(even) { background: #f8f8f8; }
.fold { display: inline-block; width: 6px; height: 6px; margin-right: 3px; border: 1px solid #bbb; font-size: 6px; line-height: 4px; text-align: center; }
.c1 { width: 130px; }
.c2 { width: 32px; }

.view { display: flex; flex: 1; flex-direction: column; min-width: 0; }
.tabs { display: flex; height: 16px; margin-right: 6px; border-bottom: 1px solid #3482a8; }
.tab { gap: 2px; width: 47px; height: 14px; }
.tab svg { width: 11px; height: 11px; }
.tab.on { width: 118px; height: 15px; padding-left: 3px; justify-content: start; background: #005f87; color: #fff; gap: 3px; }
.tab.on span { width: 73px; text-align: left; }
.tab .sm { width: 7px; height: 7px; }
.canvas { position: relative; flex: 1; }
.scene { position: absolute; inset: 0; width: 100%; height: 100%; }
.solid { stroke: #2a2a2a; stroke-width: 1.500; }
.axis { font: 9px "Liberation Sans", sans-serif; }
.pickbar { position: absolute; left: 382px; top: 3px; display: flex; align-items: center; gap: 6px; padding: 3px 3px 3px 9px; border-bottom: 1px solid #ddd; }
.pickbar .combo { width: 100px; }
.pickbar button { width: 16px; }
.pickbar svg { width: 12px; height: 4px; }
.pickbar .vr { height: 14px; }
.pickbar .tri { margin: 8px 0 0 -4px; }

.dialog { position: absolute; background: #f0f0f0; font-size: 8px; box-shadow: 0 0 1px #888; }
.dialog header { display: flex; align-items: center; gap: 4px; background: #005f87; color: #fff; }
.dialog header h2 { flex: 1; }
.dialog header svg { width: 9px; height: 9px; }
.dialog header button { width: 9px; font-weight: 700; font-size: 10px; }
.dialog .pane { background: #fff; }
.dialog h3 { display: flex; align-items: center; gap: 5px; color: #106a92; }
.dialog h3 .tri { border-left-width: 3px; border-right-width: 3px; }
.dialog .pick { display: flex; gap: 2px; }
.pick > * { display: flex; align-items: center; background: #ffe078; }
.pick > span { flex: 1; }
.fold-up { display: flex; justify-content: center; align-items: center; border-bottom: 1px solid #ccc; }
.dialog footer { display: flex; justify-content: end; }
.ok, .cancel { height: 14px; border: 1px solid #4a8fae; }
.ok { background: #005f87; color: #fff; }
.cancel { color: #106a92; background: #fff; }

.color { left: 49px; top: 163px; width: 177px; font-size: 7px; }
.color header { height: 13px; padding: 0 5px 0 1px; }
.color header h2, .color h3 { font-size: 8px; }
.color .pane { margin: 0 4px 0 1px; padding: 0 5px 4px 5px; }
.color h3 { height: 19px; }
.color .search { display: flex; align-items: center; gap: 1px; height: 14px; white-space: nowrap; }
.search input { width: 43px; height: 12px; border: 1px solid #888; background: linear-gradient(#222, #222) 2px center / 1px 9px no-repeat; }
.color .combo { flex: 1; height: 13px; }
.palette { display: grid; grid-template-columns: repeat(12, 1fr); grid-template-rows: repeat(18, 1fr); gap: 1px; height: 262px; margin-top: 1px; padding: 1px; background: #a4bcc6; border: 1px solid #ccc; }
.swatch { border: 1px solid #457f96; padding: 1px; background-clip: content-box; outline: 1px solid #c8dbe2; outline-offset: -2px; }
.color .inherit { margin-top: 5px; border-top: 1px solid #ccc; }
.color .pick { height: 19px; }
.pick button { width: 18px; }
.color .pick svg { width: 15px; height: 15px; }
.color .fold-up { height: 12px; }
.color footer { gap: 2px; padding: 3px 9px 5px; }
.color .ok, .color .cancel { width: 32px; }

.area { left: 246px; top: 175px; width: 201px; }
.area header { height: 16px; gap: 5px; padding: 0 5px; }
.area header h2, .area h3 { font-size: 9px; }
.area .pane { margin: 1px 4px 0; padding: 0 5px 5px; }
.area h3 { height: 19px; }
.area .row { display: flex; justify-content: space-between; align-items: center; height: 17px; }
.area .row .combo { width: 84px; height: 15px; }
.area .row select { width: 70px; margin: 1px; background: #d4e9ee; border: 1px solid #9ab; }
.area .pick { height: 20px; margin-bottom: 2px; }
.area .pick svg { width: 12px; height: 12px; margin-right: 2px; }
.area .pick button { width: 20px; }
.area .pick button svg { width: 15px; height: 15px; margin: 0; color: #555; }
.area .section { width: 100%; height: 14px; padding-left: 6px; justify-content: start; gap: 6px; background: #f0f0f0; border: 1px solid #e2e2e2; color: #106a92; }
.area .muted { color: #999; height: 18px; }
.add { width: 15px; height: 15px; border: 1px solid #ccc; }
.add svg { width: 10px; height: 10px; }
.area .fold-up { height: 14px; margin: 0 4px; }
.area footer { gap: 4px; padding: 3px 10px 8px; }
.area .ok, .area .cancel { width: 35px; }

.marks { position: absolute; left: 0; top: 0; width: 1118px; height: 625px; pointer-events: none; }
```
FILE: palette.js
```js
const colours = `
000000 0d0d0d 333333 4d4d4d 666666 808080 999999 b3b3b3 cccccc dddddd f2f2f2 ffffff
ff00ff ff0000 ff9900 ffff00 ccff33 00ff00 009900 00ffff 0099ff 0000ff 6633cc 996633
cc33cc ff3333 ff6600 ffcc00 aae600 66cc00 00aa66 00cccc 0044ff 0000bb 6600cc 663300
ff33dd ff5555 ff9933 ffdd33 bbee33 33ff33 00cc88 55ffff 3399ff 3333ff 6600ff aa6600
ff66ff ff6666 ffbb44 ffee77 ccff66 99ff66 77ffcc 99ffff 66ccff 4466ff 7766ff cc9933
ffaaff ff8f8f ffcc99 ffeeaa ccff99 ddffcc 99ffcc bbffff 99ccff 88aaff bbb5ff f0cc88
441a44 660000 aa3311 997722 666633 558833 336633 225566 223f66 0a2244 443355 4d4630
884466 8a4444 bb7050 a09060 8f9933 88bb66 449068 447f8c 446088 224477 664488 8f8868
b87099 9f6666 c99560 e3c44c b3b060 9fd9a8 88b09c 88bbcc a0a8b0 88a0b3 776b99 c8bfa0
d9a0cc d09c9c d3b3a0 e6d499 c4c08c c4e4bc b5cfc0 b0dddd c0d3e6 a0bfdd a8a3cc dedaca
660044 7a0000 6f2f0c 706c00 4d6600 1a4a00 003a00 004a44 004466 112277 220022 2b2522
8c4470 990000 8c4f00 999000 4d771a 006600 005528 006666 006699 003399 3a1058 403530
bb2aa0 cc3333 e67a0c cccc33 779f2a 339933 009070 009999 0099dd 4c6ab0 501c80 5f4c40
b87099 ee4433 ff9f40 e6dd4c 9fcc40 66c058 33aa88 338c8c 00aaee 4c77aa 6666cc 887766
ee66aa ff8888 f9a066 ffe666 cedd66 99cc77 77c08c 5ccfcf 55aaff 5599dd 7f74b5 b37f59
ee90bb ff9090 f9ac80 ffee88 dde099 acd6a0 99d0a0 9fd6d0 99ccee 99aadd 9990cc b88f66
f3bbd6 ffb0b0 fcc8a0 fff4a0 e4e680 cce8cc b3ddbb bfe3e0 bfe0f3 b3bfe3 aca8d9 c8a588
f8d4e4 ffd4d0 f8d0b3 fffbb8 e6ead6 ddead6 cce6d4 d9eeee ddf8ff ccd4ea c8c4e4 d0b8a4`;

const palette = document.getElementById('palette');
for (const hex of colours.trim().split(/\s+/)) {
  const swatch = document.createElement('button');
  swatch.type = 'button';
  swatch.className = 'swatch';
  swatch.setAttribute('aria-label', '#' + hex);
  swatch.style.backgroundColor = '#' + hex;
  palette.append(swatch);
}

const rows = document.getElementById('rows');
for (let i = 0; i < 36; i++) {
  const row = rows.insertRow();
  for (let c = 0; c < 3; c++) row.insertCell();
}
```
